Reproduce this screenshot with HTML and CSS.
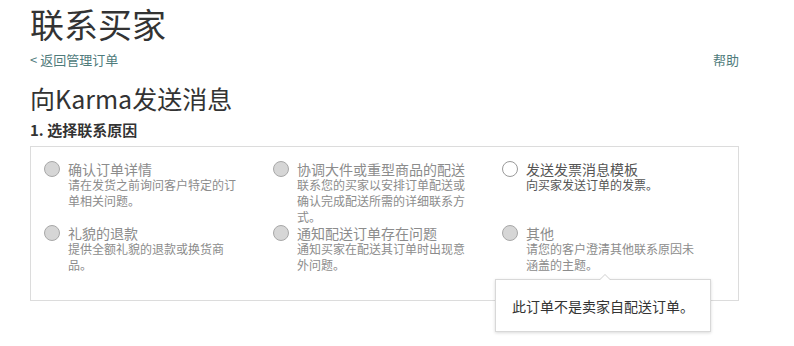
FILE: index.html
```html
<!DOCTYPE html>
<html lang="zh-CN">
<head>
<meta charset="utf-8">
<link rel="stylesheet" href="styles.css">
</head>
<body>
<div class="page">
  <h1 class="title">联系买家</h1>
  <div class="navrow">
    <a class="link">&lt; 返回管理订单</a>
    <a class="link">帮助</a>
  </div>
  <h2 class="subtitle">向Karma发送消息</h2>
  <div class="step">1. 选择联系原因</div>
  <div class="box">
    <div class="grid">
      <div class="opt disabled">
        <span class="radio"></span>
        <div class="txt">
          <div class="otitle">确认订单详情</div>
          <div class="odesc">请在发货之前询问客户特定的订单相关问题。</div>
        </div>
      </div>
      <div class="opt disabled">
        <span class="radio"></span>
        <div class="txt">
          <div class="otitle">协调大件或重型商品的配送</div>
          <div class="odesc">联系您的买家以安排订单配送或确认完成配送所需的详细联系方式。</div>
        </div>
      </div>
      <div class="opt">
        <span class="radio"></span>
        <div class="txt">
          <div class="otitle">发送发票消息模板</div>
          <div class="odesc">向买家发送订单的发票。</div>
        </div>
      </div>
      <div class="opt disabled">
        <span class="radio"></span>
        <div class="txt">
          <div class="otitle">礼貌的退款</div>
          <div class="odesc">提供全额礼貌的退款或换货商品。</div>
        </div>
      </div>
      <div class="opt disabled">
        <span class="radio"></span>
        <div class="txt">
          <div class="otitle">通知配送订单存在问题</div>
          <div class="odesc">通知买家在配送其订单时出现意外问题。</div>
        </div>
      </div>
      <div class="opt disabled">
        <span class="radio"></span>
        <div class="txt">
          <div class="otitle">其他</div>
          <div class="odesc">请您的客户澄清其他联系原因未涵盖的主题。</div>
        </div>
      </div>
    </div>
    <div class="tooltip">此订单不是卖家自配送订单。</div>
  </div>
</div>
</body>
</html>
```

FILE: styles.css
```css
html, body {
  margin: 0;
  padding: 0;
  background: #fff;
}
body {
  min-height: 346px;
  font-family: "Noto Sans CJK SC", "Noto Sans", sans-serif;
  color: #333;
}
.page {
  width: 709px;
  margin-left: 30px;
  padding-top: 4px;
  padding-bottom: 50px;
}
.title {
  margin: 0;
  font-size: 34px;
  font-weight: 400;
  line-height: 40px;
  color: #333;
}
.navrow {
  margin-top: 7px;
  display: flex;
  justify-content: space-between;
  font-size: 13px;
  line-height: 18px;
}
.link {
  color: #4f7b7b;
  text-decoration: none;
}
.subtitle {
  margin: 14px 0 0;
  font-size: 25px;
  font-weight: 400;
  line-height: 30px;
  color: #333;
}
.step {
  margin-top: 7px;
  font-size: 15px;
  font-weight: 700;
  line-height: 20px;
  color: #333;
}
.box {
  position: relative;
  margin-top: 6px;
  border: 1px solid #dcdcdc;
  padding: 14px 9px 27px 13px;
}
.grid {
  display: grid;
  grid-template-columns: 229px 229px 229px;
}
.opt {
  display: flex;
  align-items: flex-start;
}
.radio {
  flex: none;
  box-sizing: border-box;
  width: 16px;
  height: 16px;
  border: 1px solid #9a9a9a;
  border-radius: 50%;
  background: #fff;
}
.disabled .radio {
  background: #d6d6d6;
  border-color: #a8a8a8;
}
.txt {
  margin-left: 8px;
  width: 175px;
}
.otitle {
  font-size: 14px;
  line-height: 16px;
  color: #555;
}
.odesc {
  font-size: 12px;
  line-height: 16px;
  color: #555;
}
.disabled .otitle,
.disabled .odesc {
  color: #8c8c8c;
}
.tooltip {
  position: absolute;
  left: 464px;
  top: 132px;
  width: 216px;
  height: 53px;
  box-sizing: border-box;
  padding: 16px 16px 0;
  background: #fff;
  border: 1px solid #d8d8d8;
  box-shadow: 0 1px 3px rgba(0, 0, 0, 0.15);
  font-size: 14px;
  line-height: 20px;
  color: #333;
  z-index: 2;
}
.tooltip::before,
.tooltip::after {
  content: "";
  position: absolute;
  left: 103px;
  width: 0;
  height: 0;
  border-left: 6px solid transparent;
  border-right: 6px solid transparent;
}
.tooltip::before {
  top: -6px;
  border-bottom: 6px solid #d0d0d0;
}
.tooltip::after {
  top: -5px;
  border-bottom: 6px solid #fff;
}
```
